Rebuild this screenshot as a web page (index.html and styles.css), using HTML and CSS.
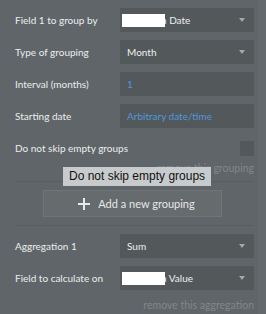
FILE: index.html
```html
<!DOCTYPE html>
<html>
<head>
	<meta charset="utf-8">
	<title>Grouping</title>
	<link rel="stylesheet" href="styles.css">
</head>

<body>

	<div class="wrap">
		<div class="panel">
			<div class="row">
				<label>Field 1 to group by</label>
				<div class="select"><span class="mask"></span>n Date<i class="caret"></i></div>
			</div>
			<div class="row">
				<label>Type of grouping</label>
				<div class="select">Month<i class="caret"></i></div>
			</div>
			<div class="row">
				<label>Interval (months)</label>
				<div class="select blue">1</div>
			</div>
			<div class="row">
				<label>Starting date</label>
				<div class="select blue">Arbitrary date/time</div>
			</div>
			<div class="check-row">
				<label>Do not skip empty groups</label>
				<span class="checkbox"></span>
			</div>
			<div class="remove">remove this grouping</div>

			<div class="tooltip">Do not skip empty groups</div>

			<div class="add-row">
				<div class="btn">
					<svg width="12" height="12" viewBox="0 0 12 12"><path d="M6 0v12M0 6h12" stroke="#e6e8e9" stroke-width="2"/></svg>
					Add a new grouping
				</div>
			</div>

			<div class="row first">
				<label>Aggregation 1</label>
				<div class="select">Sum<i class="caret"></i></div>
			</div>
			<div class="row">
				<label>Field to calculate on</label>
				<div class="select"><span class="mask"></span>n Value<i class="caret"></i></div>
			</div>
			<div class="remove last">remove this aggregation</div>
		</div>
		<div class="side"></div>
	</div>

</body>
</html>
```

FILE: styles.css
```css
* {
	padding: 0;
	margin: 0;
	box-sizing: border-box;
}
body {
	background-color: #5f6568;
	font-family: Lato, "Open Sans", sans-serif;
	font-size: 10px;
	color: #eceeee;
}
.wrap {
	display: flex;
	height: 314px;
}
.panel {
	position: relative;
	width: 258px;
	padding: 8px 4px 0 15px;
}
.side {
	flex: 1;
	background-color: #636a6d;
}
.row {
	display: flex;
	align-items: center;
	height: 24px;
	margin-bottom: 8px;
}
.row.first {
	margin-top: 8px;
}
.row label {
	width: 105px;
}
.select {
	position: relative;
	flex: 1;
	height: 24px;
	line-height: 24px;
	padding-left: 7px;
	background-color: #53585b;
	font-size: 10px;
	color: #eef0f0;
}
.select.blue {
	color: #4f97dc;
}
.mask {
	display: inline-block;
	width: 43px;
	height: 13px;
	margin-left: -5px;
	margin-right: -4px;
	vertical-align: -3px;
	background-color: #fff;
	position: relative;
	z-index: 1;
}
.caret {
	position: absolute;
	right: 9px;
	top: 10px;
	border-left: 3px solid transparent;
	border-right: 3px solid transparent;
	border-top: 4px solid #a3a8aa;
}
.check-row {
	display: flex;
	align-items: center;
	justify-content: space-between;
	height: 14px;
	margin-top: 13px;
}
.checkbox {
	width: 14px;
	height: 15px;
	background-color: #53585b;
}
.remove {
	text-align: right;
	color: #81878a;
	font-size: 10.5px;
	line-height: 14px;
	margin-top: 6px;
	padding-bottom: 6px;
	border-bottom: 1px solid #575d60;
}
.remove.last {
	margin-top: 4px;
	padding-bottom: 5px;
}
.tooltip {
	position: absolute;
	left: 63px;
	top: 167px;
	width: 148px;
	height: 19px;
	line-height: 19px;
	padding-left: 6px;
	background-color: #c7cbcd;
	color: #111;
	font-family: "Liberation Sans", Arial, sans-serif;
	font-size: 12px;
}
.add-row {
	padding: 8px 0 8px 28px;
	border-bottom: 1px solid #575d60;
}
.btn {
	display: flex;
	align-items: center;
	justify-content: center;
	gap: 8px;
	width: 179px;
	height: 27px;
	padding-left: 8px;
	background-color: #666b6e;
	border: 1px solid #6f7578;
	font-size: 11px;
	color: #e6e8e9;
}
```
